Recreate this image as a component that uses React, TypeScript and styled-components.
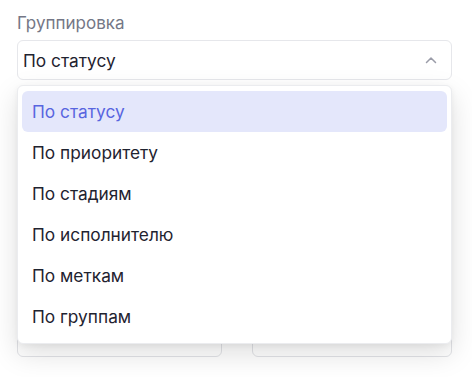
import React from "react";
import styled, { createGlobalStyle } from "styled-components";

const Global = createGlobalStyle`
  html, body { margin: 0; padding: 0; background: #ffffff; }
  body { font-family: Inter, "Noto Sans", sans-serif; -webkit-font-smoothing: antialiased; }
  * { box-sizing: border-box; }
`;

const Page = styled.div`
  width: 472px;
  height: 377px;
  padding: 12px 20px 0 17px;
  display: flex;
  flex-direction: column;
`;

const Field = styled.div`
  position: relative;
  display: flex;
  flex-direction: column;
  gap: 6px;
`;

const Label = styled.div`
  font-size: 17px;
  line-height: 22px;
  color: #747786;
`;

const Trigger = styled.div`
  height: 40px;
  border: 1px solid #e6e7eb;
  border-radius: 6px;
  display: flex;
  align-items: center;
  justify-content: space-between;
  padding: 0 14px 0 5px;
  font-size: 17.3px;
  color: #1f2330;
  background: #fff;
`;

const Menu = styled.div`
  position: absolute;
  top: 73px;
  left: 0;
  right: 0;
  z-index: 2;
  background: #fff;
  border: 1px solid #ebecef;
  border-radius: 6px;
  padding: 5px 4px 6px;
  box-shadow: 0 10px 28px rgba(0, 0, 0, 0.13), 0 2px 6px rgba(0, 0, 0, 0.05);
  display: flex;
  flex-direction: column;
`;

const Item = styled.div<{ $active?: boolean }>`
  height: 41px;
  display: flex;
  align-items: center;
  padding: 0 10px;
  border-radius: 6px;
  font-size: 17.3px;
  color: ${(p) => (p.$active ? "#5865e0" : "#1f2330")};
  background: ${(p) => (p.$active ? "#e4e7fb" : "transparent")};
`;

const Row = styled.div`
  margin-top: 237px;
  display: grid;
  grid-template-columns: 205px 200px;
  justify-content: space-between;
`;

const Box = styled.div`
  height: 40px;
  border: 1px solid #e2e3e7;
  border-radius: 6px;
  background: #fff;
`;

const items = [
  "По статусу",
  "По приоритету",
  "По стадиям",
  "По исполнителю",
  "По меткам",
  "По группам",
];

export default function App() {
  return (
    <>
      <Global />
      <Page>
        <Field>
          <Label>Группировка</Label>
          <Trigger>
            <span>По статусу</span>
            <svg width="12" height="8" viewBox="0 0 12 8" fill="none">
              <path d="M1.5 6.5 L6 2 L10.5 6.5" stroke="#9a9ca8" strokeWidth="1.5" strokeLinecap="round" strokeLinejoin="round" />
            </svg>
          </Trigger>
          <Menu>
            {items.map((t, i) => (
              <Item key={t} $active={i === 0}>
                {t}
              </Item>
            ))}
          </Menu>
        </Field>
        <Row>
          <Box />
          <Box />
        </Row>
      </Page>
    </>
  );
}
